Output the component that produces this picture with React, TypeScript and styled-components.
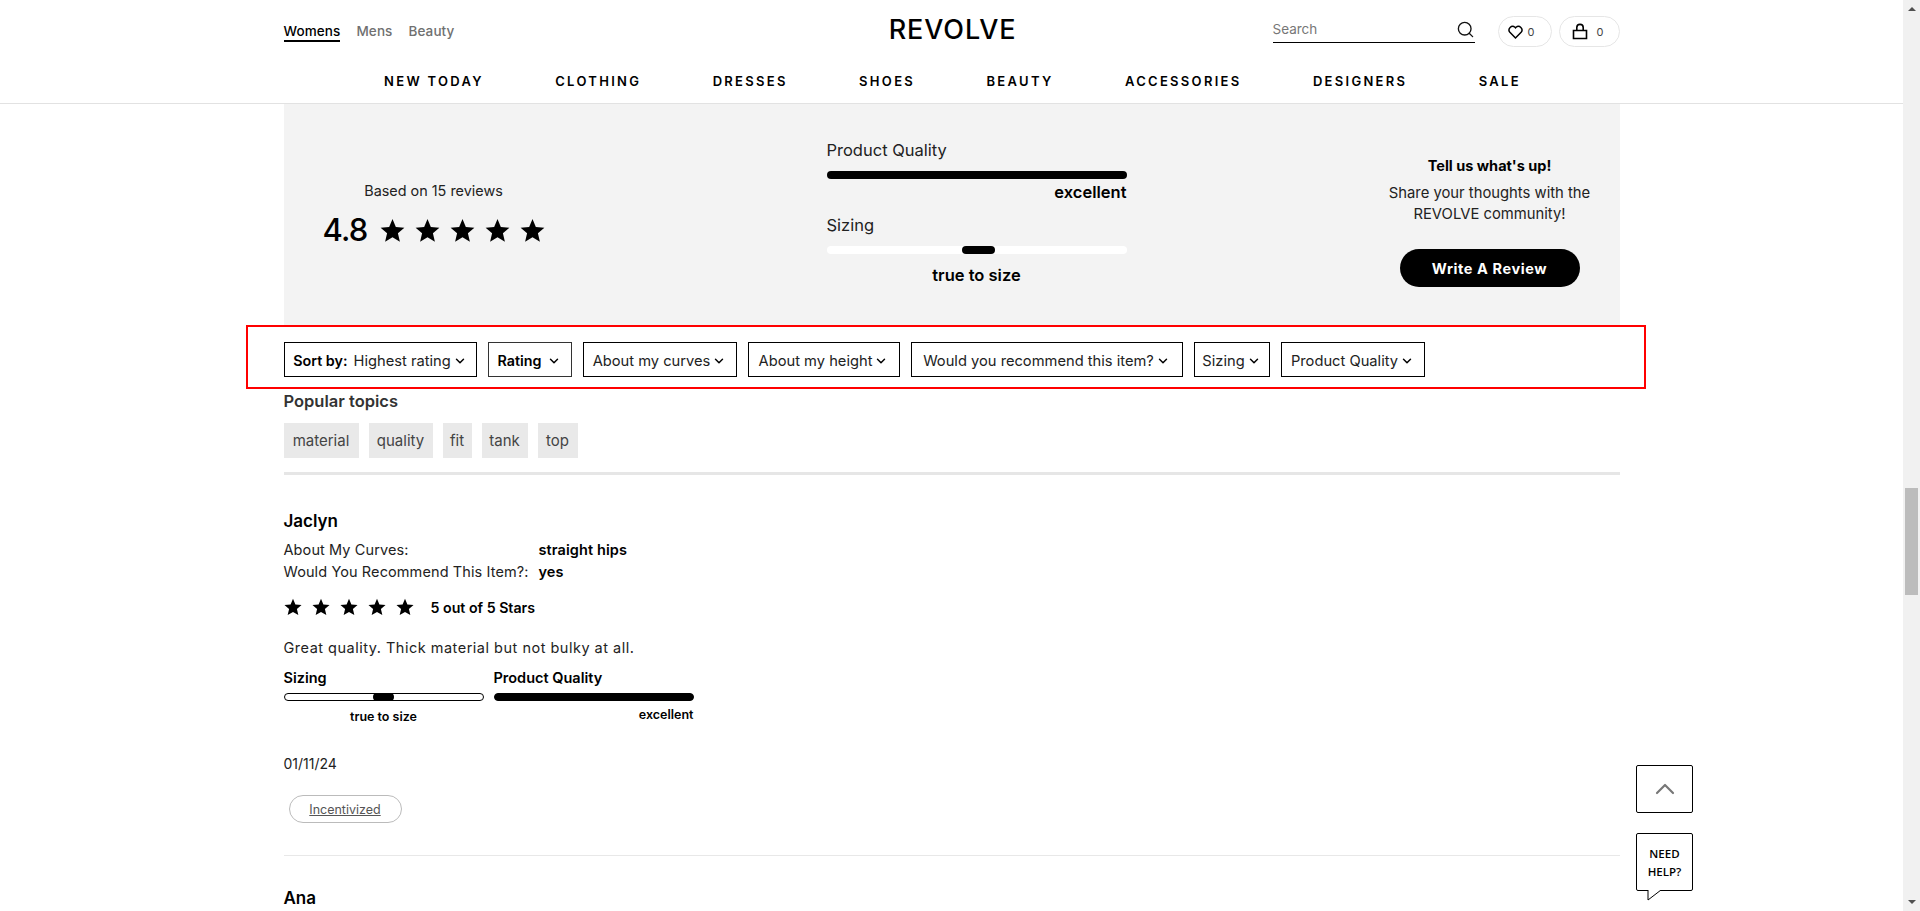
import React, { FC, ReactElement } from "react"
import styled, { createGlobalStyle } from "styled-components"
import { ChevronDown, ChevronUp, Search } from "lucide-react"

const GlobalStyle = createGlobalStyle`
  html, body {
    margin: 0;
    padding: 0;
    height: 911px;
    overflow: hidden;
    background: #fff;
  }
  * { box-sizing: border-box; }
  body {
    font-family: Inter, "Open Sans", "Liberation Sans", sans-serif;
    color: #000;
  }
`

const Frame = styled.div`
  display: flex;
  width: 1920px;
  height: 911px;
  overflow: hidden;
  position: relative;
`

const Page = styled.div`
  width: 1903px;
  flex: none;
  overflow: hidden;
`

const Scrollbar = styled.div`
  width: 17px;
  flex: none;
  background: #f1f1f1;
  display: flex;
  flex-direction: column;
  align-items: center;
  justify-content: space-between;
  position: relative;
  padding: 7px 0;
`

const ScrollArrow = styled.div<{ $up?: boolean }>`
  width: 0;
  height: 0;
  border-left: 4px solid transparent;
  border-right: 4px solid transparent;
  ${p => p.$up ? "border-bottom: 4px solid #505050;" : "border-top: 4px solid #505050;"}
`

const ScrollThumb = styled.div`
  position: absolute;
  left: 2px;
  top: 488px;
  width: 13px;
  height: 107px;
  background: #bcbcbc;
`

/* header */
const Header = styled.header`
  height: 104px;
  border-bottom: 1px solid #e2e2e2;
`

const TopRow = styled.div`
  width: 1336px;
  height: 62px;
  margin: 0 auto;
  display: grid;
  grid-template-columns: 1fr auto 1fr;
  align-items: start;
`

const GenderTabs = styled.div`
  display: flex;
  gap: 16px;
  padding-top: 23px;
`

const GenderTab = styled.a<{ $active?: boolean }>`
  font-size: 13.5px;
  font-weight: 500;
  letter-spacing: 0.1px;
  line-height: 16px;
  padding-bottom: 1px;
  color: ${p => (p.$active ? "#000" : "#707070")};
  border-bottom: 2px solid ${p => (p.$active ? "#000" : "transparent")};
`

const Logo = styled.div`
  font-size: 27px;
  font-weight: 500;
  letter-spacing: 0.9px;
  line-height: 30px;
  padding: 15px 0 0 2px;
`

const HeaderTools = styled.div`
  display: flex;
  justify-content: flex-end;
  align-items: flex-start;
`

const SearchBox = styled.div`
  width: 202px;
  height: 27px;
  margin-top: 16px;
  margin-right: 16px;
  border-bottom: 1px solid #000;
  display: flex;
  justify-content: space-between;
  align-items: flex-start;
  font-size: 13.5px;
  line-height: 26px;
  color: #777;
`

const CountPill = styled.div<{ $width: number; $gap: number; $inset: number }>`
  width: ${p => p.$width}px;
  height: 31px;
  margin-top: 16px;
  margin-left: 7px;
  padding-right: ${p => p.$inset}px;
  border: 1px solid #e6e6e6;
  border-radius: 16px;
  display: flex;
  align-items: center;
  justify-content: center;
  gap: ${p => p.$gap}px;
  font-size: 11px;
  color: #444;
`

const Nav = styled.nav`
  display: flex;
  justify-content: center;
  gap: 71.4px;
  padding-left: 2px;
`

const NavItem = styled.a`
  font-size: 13px;
  font-weight: 600;
  letter-spacing: 2.3px;
  line-height: 38px;
`

const Content = styled.main`
  width: 1336px;
  margin: 0 auto;
`

/* summary panel */
const Summary = styled.section`
  height: 221px;
  background: #f3f3f3;
  display: grid;
  grid-template-columns: 543px 300px 1fr;
`

const SummaryScore = styled.div`
  width: 300px;
  padding-top: 77px;
  display: flex;
  flex-direction: column;
  align-items: center;
`

const BasedOn = styled.div`
  font-size: 14.4px;
  line-height: 20px;
  color: #222;
`

const ScoreRow = styled.div`
  display: flex;
  align-items: center;
  gap: 12px;
  margin-top: 11px;
`

const ScoreValue = styled.div`
  font-size: 31px;
  font-weight: 500;
  letter-spacing: -0.8px;
  line-height: 36px;
`

const Stars = styled.div<{ $gap: number }>`
  display: flex;
  gap: ${p => p.$gap}px;
`

const Meters = styled.div`
  padding-top: 34px;
`

const MeterTitle = styled.div`
  font-size: 16.5px;
  line-height: 24px;
  color: #222;
`

const MeterTrack = styled.div<{ $tone: "white" | "black" }>`
  height: 8px;
  margin-top: 9px;
  border-radius: 4px;
  background: ${p => (p.$tone === "white" ? "#fff" : "#000")};
  display: flex;
  justify-content: center;
`

const MeterKnob = styled.div`
  width: 33px;
  height: 8px;
  margin-left: 3px;
  border-radius: 4px;
  background: #000;
`

const MeterValue = styled.div<{ $align: "right" | "center"; $top: number; $gap: number }>`
  font-size: 16.5px;
  font-weight: 600;
  line-height: 24px;
  text-align: ${p => p.$align};
  margin: ${p => p.$top}px 0 ${p => p.$gap}px;
`

const Callout = styled.div`
  justify-self: end;
  width: 240px;
  margin-right: 10px;
  padding-top: 51px;
  display: flex;
  flex-direction: column;
  align-items: center;
  text-align: center;
`

const CalloutTitle = styled.div`
  font-size: 14.5px;
  font-weight: 700;
  line-height: 22px;
`

const CalloutText = styled.div`
  font-size: 14.8px;
  line-height: 21px;
  margin-top: 6px;
  white-space: nowrap;
  color: #222;
`

const WriteButton = styled.button`
  width: 180px;
  height: 38px;
  margin-top: 24px;
  border: none;
  border-radius: 19px;
  background: #000;
  color: #fff;
  font-family: inherit;
  font-size: 14.5px;
  font-weight: 700;
  letter-spacing: 0.6px;
`

/* filters */
const FilterBox = styled.div`
  margin: 0 -26px 0 -38px;
  height: 64px;
  border: 2px solid #f00;
  padding: 15px 0 0 36px;
  display: flex;
  gap: 11px;
`

const FilterButton = styled.div<{ $width: number; $grey?: boolean }>`
  width: ${p => p.$width}px;
  height: 35px;
  padding-top: 2px;
  border: 1px solid ${p => (p.$grey ? "#333" : "#000")};
  display: flex;
  align-items: center;
  justify-content: center;
  gap: 2px;
  font-size: 14.7px;
  line-height: 20px;
  color: #222;
  white-space: nowrap;

  b {
    font-size: 14.3px;
    font-weight: 600;
    color: #000;
    margin-right: 4px;
  }
`

const Topics = styled.section`
  padding-top: 1px;
  height: 86px;
  border-bottom: 3px solid #e6e6e6;
`

const TopicsTitle = styled.div`
  font-size: 16.5px;
  font-weight: 600;
  line-height: 22px;
  color: #333;
`

const TopicList = styled.div`
  display: flex;
  gap: 10px;
  margin-top: 11px;
`

const Topic = styled.div<{ $width: number }>`
  width: ${p => p.$width}px;
  height: 35px;
  background: #e9e9e9;
  display: flex;
  align-items: center;
  justify-content: center;
  font-size: 15px;
  color: #444;
`

/* review */
const Review = styled.article`
  height: 381px;
  padding-top: 34px;
  border-bottom: 1px solid #e8e8e8;
`

const Reviewer = styled.div`
  font-size: 17px;
  font-weight: 600;
  line-height: 24px;
`

const AttributeGrid = styled.dl`
  display: grid;
  grid-template-columns: 255px auto;
  justify-content: start;
  margin: 6px 0 0;
  font-size: 14.5px;
  letter-spacing: 0.1px;
  line-height: 22px;

  dt { color: #222; white-space: nowrap; }
  dd { margin: 0; font-weight: 600; }
`

const RatingRow = styled.div`
  display: flex;
  align-items: center;
  gap: 17px;
  margin-top: 12px;
  height: 24px;
`

const RatingText = styled.div`
  font-size: 14.2px;
  font-weight: 600;
`

const ReviewBody = styled.p`
  margin: 18px 0 0;
  font-size: 14.5px;
  letter-spacing: 0.5px;
  line-height: 22px;
  color: #222;
`

const ReviewMeters = styled.div`
  display: grid;
  grid-template-columns: 200px 200px;
  gap: 10px;
  margin-top: 9px;
  width: 410px;
`

const ReviewMeterTitle = styled.div`
  font-size: 14.5px;
  font-weight: 600;
  line-height: 20px;
`

const ReviewTrack = styled.div<{ $filled?: boolean }>`
  height: 8px;
  margin-top: 5px;
  border: 1px solid #000;
  border-radius: 4px;
  background: ${p => (p.$filled ? "#000" : "#fff")};
  display: flex;
  justify-content: center;
  align-items: center;
`

const ReviewKnob = styled.div`
  width: 21px;
  height: 8px;
  flex: none;
  border-radius: 4px;
  background: #000;
`

const ReviewMeterValue = styled.div<{ $align: "right" | "center"; $top: number }>`
  font-size: 12.5px;
  font-weight: 600;
  line-height: 16px;
  text-align: ${p => p.$align};
  margin-top: ${p => p.$top}px;
`

const ReviewDate = styled.div`
  margin-top: 29px;
  font-size: 14px;
  line-height: 20px;
  color: #222;
`

const Incentive = styled.div`
  width: 113px;
  height: 28px;
  margin: 21px 0 0 5px;
  border: 1px solid #bbb;
  border-radius: 14px;
  display: flex;
  align-items: center;
  justify-content: center;
  font-size: 12.5px;
  color: #555;
  text-decoration: underline;
`

const NextReviewer = styled(Reviewer)`
  margin-top: 30px;
`

/* floating */
const TopButton = styled.div`
  position: absolute;
  left: 1636px;
  top: 765px;
  width: 57px;
  height: 48px;
  border: 1px solid #000;
  border-radius: 2px;
  background: #fff;
  display: flex;
  align-items: center;
  justify-content: center;
  color: #777;
`

const HelpButton = styled.div`
  position: absolute;
  left: 1636px;
  top: 833px;
  width: 57px;
  height: 58px;
  border: 1px solid #000;
  border-radius: 2px;
  background: #fff;
  font-family: "Open Sans", sans-serif;
  font-size: 11.5px;
  font-weight: 600;
  line-height: 18px;
  text-align: center;
  padding-top: 11px;
`

const HelpTail = styled.svg`
  position: absolute;
  left: 10px;
  top: 56px;
`

const Star: FC<{ size: number }> = ({ size }): ReactElement => (
  <svg width={size} height={size} viewBox="0 0 24 24">
    <polygon points="12,1 15.2,8.6 23.4,9.3 17.2,14.7 19.1,22.8 12,18.5 4.9,22.8 6.8,14.7 0.6,9.3 8.8,8.6" fill="#000" />
  </svg>
)

const StarRow: FC<{ size: number; gap: number }> = ({ size, gap }): ReactElement => (
  <Stars $gap={gap}>
    {[0, 1, 2, 3, 4].map(i => <Star key={i} size={size} />)}
  </Stars>
)

const Chevron: FC = (): ReactElement => <ChevronDown size={14} strokeWidth={2.5} color="#000" />

const navItems = ["NEW TODAY", "CLOTHING", "DRESSES", "SHOES", "BEAUTY", "ACCESSORIES", "DESIGNERS", "SALE"]

const filters = [
  { label: "About my curves", width: 154 },
  { label: "About my height", width: 152 },
  { label: "Would you recommend this item?", width: 272 },
  { label: "Sizing", width: 76 },
  { label: "Product Quality", width: 144 },
]

const topics = [
  { label: "material", width: 75 },
  { label: "quality", width: 64 },
  { label: "fit", width: 29 },
  { label: "tank", width: 46 },
  { label: "top", width: 40 },
]

const App: FC = (): ReactElement => (
  <Frame>
    <GlobalStyle />
    <Page>
      <Header>
        <TopRow>
          <GenderTabs>
            <GenderTab $active>Womens</GenderTab>
            <GenderTab>Mens</GenderTab>
            <GenderTab>Beauty</GenderTab>
          </GenderTabs>
          <Logo>REVOLVE</Logo>
          <HeaderTools>
            <SearchBox>
              <span>Search</span>
              <Search size={19} color="#111" strokeWidth={1.7} style={{ marginTop: 4 }} />
            </SearchBox>
            <CountPill $width={54} $gap={4} $inset={8}>
              <svg width="17" height="16" viewBox="0 0 24 24" fill="none" stroke="#000" strokeWidth="2.2">
                <path d="M12 21 3.6 12.4a5.4 5.4 0 0 1 7.6-7.6l.8.9.8-.9a5.4 5.4 0 0 1 7.6 7.6z" />
              </svg>
              0
            </CountPill>
            <CountPill $width={61} $gap={9} $inset={3}>
              <svg width="16" height="17" viewBox="0 0 16 17" fill="none" stroke="#000" strokeWidth="1.6">
                <path d="M1.5 7.5h13v8h-13z" />
                <path d="M4.8 7.5V4.6a3.2 3.2 0 0 1 6.4 0v2.9" />
              </svg>
              0
            </CountPill>
          </HeaderTools>
        </TopRow>
        <Nav>
          {navItems.map(item => <NavItem key={item}>{item}</NavItem>)}
        </Nav>
      </Header>
      <Content>
        <Summary>
          <SummaryScore>
            <BasedOn>Based on 15 reviews</BasedOn>
            <ScoreRow>
              <ScoreValue>4.8</ScoreValue>
              <StarRow size={25} gap={10} />
            </ScoreRow>
          </SummaryScore>
          <Meters>
            <MeterTitle>Product Quality</MeterTitle>
            <MeterTrack $tone="black" />
            <MeterValue $align="right" $top={1} $gap={9}>excellent</MeterValue>
            <MeterTitle>Sizing</MeterTitle>
            <MeterTrack $tone="white"><MeterKnob /></MeterTrack>
            <MeterValue $align="center" $top={9} $gap={0}>true to size</MeterValue>
          </Meters>
          <Callout>
            <CalloutTitle>Tell us what's up!</CalloutTitle>
            <CalloutText>Share your thoughts with the<br />REVOLVE community!</CalloutText>
            <WriteButton>Write A Review</WriteButton>
          </Callout>
        </Summary>
        <FilterBox>
          <FilterButton $width={193}><b>Sort by:</b>Highest rating <Chevron /></FilterButton>
          <FilterButton $width={84} $grey><b>Rating</b> <Chevron /></FilterButton>
          {filters.map(f => (
            <FilterButton key={f.label} $width={f.width}>{f.label}<Chevron /></FilterButton>
          ))}
        </FilterBox>
        <Topics>
          <TopicsTitle>Popular topics</TopicsTitle>
          <TopicList>
            {topics.map(t => <Topic key={t.label} $width={t.width}>{t.label}</Topic>)}
          </TopicList>
        </Topics>
        <Review>
          <Reviewer>Jaclyn</Reviewer>
          <AttributeGrid>
            <dt>About My Curves:</dt><dd>straight hips</dd>
            <dt>Would You Recommend This Item?:</dt><dd>yes</dd>
          </AttributeGrid>
          <RatingRow>
            <StarRow size={18} gap={10} />
            <RatingText>5 out of 5 Stars</RatingText>
          </RatingRow>
          <ReviewBody>Great quality. Thick material but not bulky at all.</ReviewBody>
          <ReviewMeters>
            <div>
              <ReviewMeterTitle>Sizing</ReviewMeterTitle>
              <ReviewTrack><ReviewKnob /></ReviewTrack>
              <ReviewMeterValue $align="center" $top={8}>true to size</ReviewMeterValue>
            </div>
            <div>
              <ReviewMeterTitle>Product Quality</ReviewMeterTitle>
              <ReviewTrack $filled />
              <ReviewMeterValue $align="right" $top={6}>excellent</ReviewMeterValue>
            </div>
          </ReviewMeters>
          <ReviewDate>01/11/24</ReviewDate>
          <Incentive>Incentivized</Incentive>
        </Review>
        <NextReviewer>Ana</NextReviewer>
      </Content>
    </Page>
    <Scrollbar>
      <ScrollArrow $up />
      <ScrollThumb />
      <ScrollArrow />
    </Scrollbar>
    <TopButton><ChevronUp size={32} strokeWidth={1.6} /></TopButton>
    <HelpButton>
      NEED<br />HELP?
      <HelpTail width="16" height="11" viewBox="0 0 16 11" fill="#fff" stroke="#000" strokeWidth="1">
        <path d="M1 0v10L14 0" />
      </HelpTail>
    </HelpButton>
  </Frame>
)

export default App
